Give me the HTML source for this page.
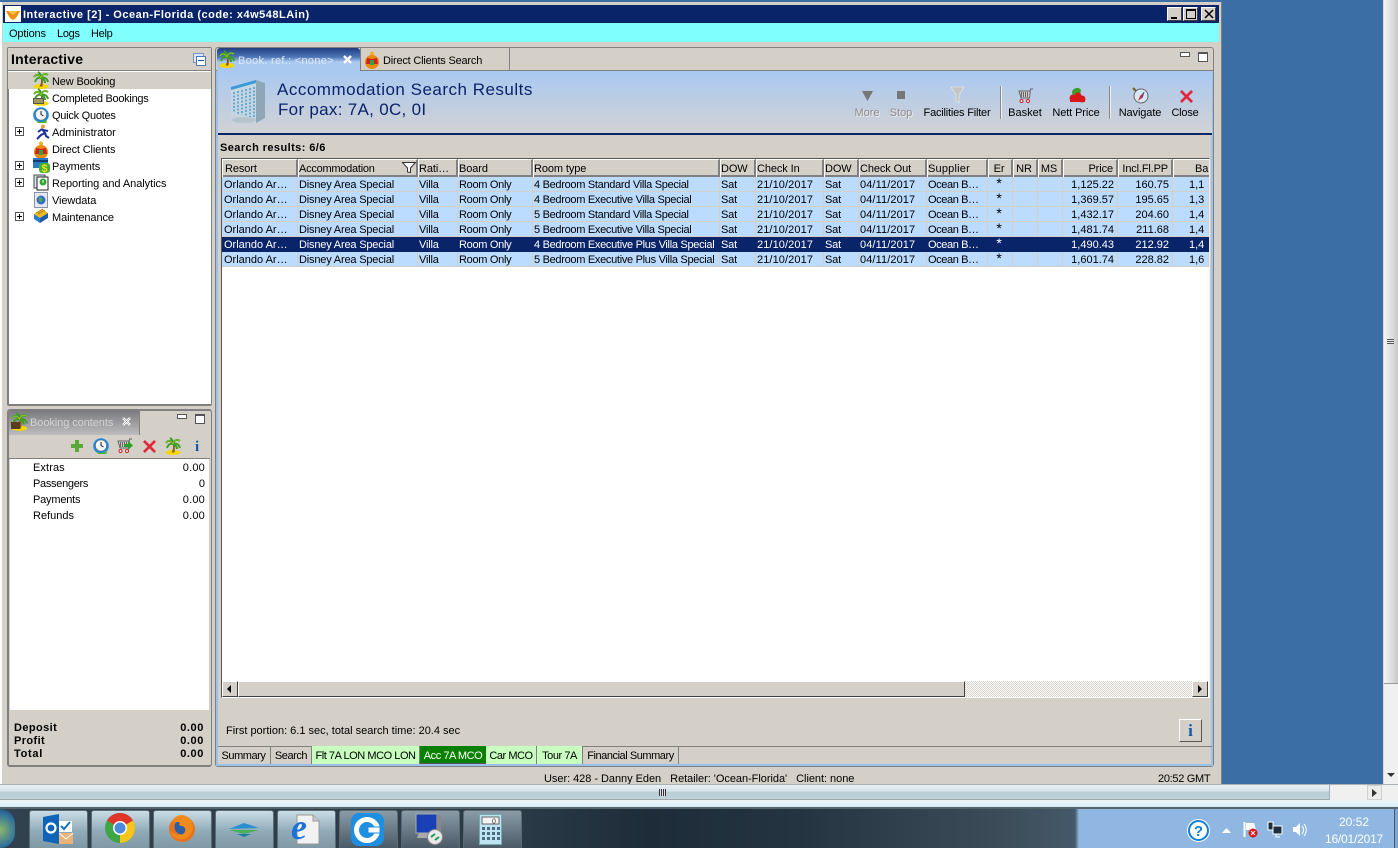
<!DOCTYPE html>
<html><head><meta charset="utf-8"><title>Interactive</title>
<style>
html,body{margin:0;padding:0;width:1398px;height:848px;overflow:hidden;background:#3a6ea5}
*{box-sizing:border-box}
body{font:11px/13px "Liberation Sans",sans-serif;color:#000;position:relative}
.a{position:absolute}
.t{position:absolute;white-space:nowrap;font:11px/13px "Liberation Sans",sans-serif;margin-top:1px}
.r{text-align:right}
.c{text-align:center}
svg{position:absolute;overflow:visible}
table{position:absolute;left:222px;top:159px;width:987px;border-collapse:separate;border-spacing:0;table-layout:fixed;font:11px/13px "Liberation Sans",sans-serif}
th{height:18px;background:#d4d0c8;font-weight:normal;text-align:left;padding:3px 0 0 0;border-left:1px solid #fff;border-top:1px solid #fff;border-right:2px solid #808080;box-shadow:inset 0 -2px #808080;white-space:nowrap;overflow:hidden;letter-spacing:-.1px;vertical-align:top}
th:first-child{padding-left:2px}
th:last-child{border-right:0}
td{height:15px;background:#bbdcff;padding:2px 0 0 1px;border-right:1px solid #d4d0c8;box-shadow:inset 0 -1px #d4d0c8;white-space:nowrap;overflow:hidden;letter-spacing:-.18px;vertical-align:top}
td:first-child{padding-left:2px;letter-spacing:0}
td:nth-child(4){letter-spacing:-.3px}
td:nth-child(5){letter-spacing:-.3px}
td:nth-child(7),td:nth-child(9){letter-spacing:.1px}
td:nth-child(10){letter-spacing:-.4px}
td:nth-child(14),td:nth-child(15),td:nth-child(16){letter-spacing:0}
tr.s td{background:#0a246a;color:#fff;border-color:#0a246a;box-shadow:none}
td.n,th.n{text-align:right;padding-right:3px;padding-left:0}
td.m,th.m{text-align:center;padding-left:0;padding-right:2px}
td.m{font-size:14px;line-height:11px;padding-top:1px}
.tb{position:absolute;top:746px;height:18px;border-right:1px solid #808080;padding:4px 0 0 0;text-align:center;white-space:nowrap;font:11px/13px "Liberation Sans",sans-serif;letter-spacing:-.45px}
.g{background:#c8ffc0}
.task{position:absolute;top:810px;height:38px;width:59px;border:1px solid #5d6a72;border-bottom:0;border-radius:3px 3px 0 0;background:linear-gradient(#c9dde6,#8faab8 55%,#7f98a6)}
.wb{position:absolute;top:7px;width:15px;height:14px;background:#d4d0c8;border:1px solid;border-color:#fff #404040 #404040 #fff}
</style></head><body>
<svg width="0" height="0" style="position:absolute">
<defs>
<symbol id="palm" viewBox="0 0 16 18"><ellipse cx="8" cy="15.500" rx="7.500" ry="2.400" fill="#f5d800"/><path d="M7.500 7C8.500 10 8 13 6.500 15.500h3C10 12 10 9 9 7z" fill="#8a5a20"/><path d="M8 7C6 3 3 3 1 6M8 7C5 6 3 8 2 11M8 7C8 4 7 2 5 1M8 7C9 3 12 2 15 4M8 7C11 6 14 7 15 11M8 7C10 8 12 9 12 12" stroke="#3f9c28" stroke-width="2" fill="none"/><path d="M8 7C6 3 3 3 1 6M8 7C9 3 12 2 15 4" stroke="#c0d820" stroke-width=".6" fill="none"/></symbol>
<symbol id="clock" viewBox="0 0 16 16"><circle cx="8" cy="8" r="7.800" fill="#1e88e0"/><circle cx="8" cy="7.500" r="5.600" fill="#f4f4f4" stroke="#555" stroke-width=".5"/><path d="M8 4v3.500l2.500 1.500" stroke="#222" fill="none"/><path d="M3 12.500C6 16 11 16 14 11.500l-.5 4.500H5z" fill="#52b52a"/></symbol>
<symbol id="cross" viewBox="0 0 14 14"><path d="M2 0 7 5 12 0l2 2-5 5 5 5-2 2-5-5-5 5-2-2 5-5-5-5z" fill="#e2273a"/></symbol>
<symbol id="shirt" viewBox="0 0 16 18"><circle cx="8" cy="2.500" r="2" fill="#f0b020"/><circle cx="8" cy="11" r="7" fill="#e88a10"/><path d="M3 7l5 1 5-1 1 6H2z" fill="#d32020"/><rect x="6" y="9" width="4" height="5" fill="#35a040"/></symbol>
<symbol id="basket" viewBox="0 0 16 16"><path d="M15 1h-2.500l-1 9H3L1 3h11" fill="#ccc" stroke="#666"/><path d="M3.500 4v5M5.500 4v5M7.500 4v5M9.500 4v5" stroke="#666"/><circle cx="3.500" cy="13" r="1.500" fill="#fff" stroke="#d02020"/><circle cx="10" cy="13" r="1.500" fill="#fff" stroke="#d02020"/></symbol>
</defs></svg>

<!-- window -->
<div class="a" style="left:0;top:0;width:1222px;height:785px;background:#d4d0c8;border-left:2px solid #fff;border-right:1px solid #808080"></div>
<div class="a" style="left:0;top:0;width:1222px;height:2px;background:#3a6ea5"></div>
<div class="a" style="left:3px;top:5px;width:1216px;height:18px;background:#0a246a"></div>
<div class="a" style="left:5px;top:6px;width:16px;height:16px;background:#fff"></div>
<svg style="left:5px;top:6px" width="16" height="16"><path d="M1 5h14l-4 7-3 2-3-2z" fill="#ee8d10"/><path d="M3 5h10l-5 4z" fill="#fbc050"/></svg>
<div class="t" style="left:23px;top:8px;color:#fff;font-weight:bold;letter-spacing:.5px">Interactive [2] - Ocean-Florida (code: x4w548LAin)</div>
<div class="wb" style="left:1167px"><div class="a" style="left:3px;top:9px;width:6px;height:2px;background:#000"></div></div>
<div class="wb" style="left:1183px"><div class="a" style="left:2px;top:1px;width:10px;height:10px;border:1px solid #000;border-top-width:2px"></div></div>
<div class="wb" style="left:1201px"><svg style="left:3px;top:2px" width="9" height="8"><path d="M0 0 8 8M8 0 0 8" stroke="#000" stroke-width="1.500"/></svg></div>
<div class="a" style="left:3px;top:23px;width:1216px;height:19px;background:#80ffff"></div>
<div class="t" style="left:9px;top:27px;letter-spacing:-.15px">Options</div>
<div class="t" style="left:57px;top:27px;letter-spacing:-.3px">Logs</div>
<div class="t" style="left:91px;top:27px;letter-spacing:-.3px">Help</div>

<!-- left panel -->
<div class="a" style="left:7px;top:47px;width:205px;height:359px;background:#fff;border:2px solid #808080;border-right-width:1px;border-radius:2px"></div>
<div class="a" style="left:8px;top:48px;width:203px;height:23px;background:#d4d0c8;border-bottom:1px solid #808080"></div>
<div class="t" style="left:11px;top:51px;font-size:14px;line-height:15px;font-weight:bold;letter-spacing:.2px">Interactive</div>
<div class="a" style="left:193px;top:53px;width:11px;height:10px;border:1px solid #7a96c0;background:#dde6f2"></div>
<div class="a" style="left:196px;top:56px;width:10px;height:10px;border:1px solid #4a78b0;background:#fff"></div>
<div class="a" style="left:198px;top:60px;width:6px;height:1px;background:#1d4f90"></div>
<div class="a" style="left:8px;top:71px;width:203px;height:18px;background:#d4d0c8;border-top:1px solid #fff"></div>
<svg style="left:33px;top:71px" width="16" height="18"><use href="#palm"/></svg>
<svg style="left:33px;top:88px" width="16" height="18"><use href="#palm"/></svg>
<div class="a" style="left:33px;top:98px;width:11px;height:6px;background:#9c9a5c;border:1px solid #555"></div>
<svg style="left:33px;top:107px" width="16" height="16"><use href="#clock"/></svg>
<svg style="left:36px;top:124px" width="14" height="16"><circle cx="7" cy="2.500" r="2" fill="#e8a040"/><path d="M6 5 9 9 5 11 1 15M9 9l1 3 3 2M6 5 2 8M7 6l5 1" stroke="#1a2f9a" stroke-width="2" fill="none"/></svg>
<svg style="left:33px;top:141px" width="16" height="18"><use href="#shirt"/></svg>
<svg style="left:33px;top:157px" width="17" height="17"><rect x="0" y="1" width="15" height="10" fill="#2878c8"/><rect x="0" y="3" width="15" height="2" fill="#123c70"/><rect x="6" y="6" width="11" height="10" rx="3" fill="#48b030"/><text x="8.500" y="15" font-family="Liberation Sans" font-weight="bold" font-size="11" fill="#e8e020">$</text></svg>
<svg style="left:34px;top:175px" width="15" height="16"><rect x="0" y="0" width="11" height="13" fill="#d8e4ee" stroke="#445"/><rect x="3" y="2" width="11" height="13" fill="#fff" stroke="#222"/><circle cx="9" cy="7" r="3.500" fill="#2fa52f"/><path d="M9 5v3" stroke="#fff"/></svg>
<svg style="left:34px;top:192px" width="14" height="16"><rect x=".5" y=".5" width="13" height="15" fill="#e8e8ee" stroke="#8a94a8"/><circle cx="7" cy="8" r="4.500" fill="#3470c8"/><path d="M5 5c3 0 4 2 3 4s-3 1-3-1" fill="#58a850"/></svg>
<svg style="left:33px;top:208px" width="16" height="16"><path d="M1 6 9 1l6 4-8 5z" fill="#f0b818"/><path d="M1 6v5l6 4v-5z" fill="#2a7cd0"/><path d="M7 10v5l8-5V5z" fill="#1a5cb0"/><path d="M3 5 10 1M5 6 12 2" stroke="#a87810"/></svg>
<div class="t" style="left:52px;top:75px;letter-spacing:-.15px">New Booking</div>
<div class="t" style="left:52px;top:92px;letter-spacing:-.28px">Completed Bookings</div>
<div class="t" style="left:52px;top:109px;letter-spacing:-.25px">Quick Quotes</div>
<div class="t" style="left:52px;top:126px;letter-spacing:-.08px">Administrator</div>
<div class="t" style="left:52px;top:143px;letter-spacing:-.15px">Direct Clients</div>
<div class="t" style="left:52px;top:160px;letter-spacing:-.1px">Payments</div>
<div class="t" style="left:52px;top:177px;letter-spacing:-.05px">Reporting and Analytics</div>
<div class="t" style="left:52px;top:194px;letter-spacing:-.1px">Viewdata</div>
<div class="t" style="left:52px;top:211px;letter-spacing:-.1px">Maintenance</div>
<svg style="left:15px;top:127px" width="9" height="94"><g fill="#fff" stroke="#555"><rect x=".5" y=".5" width="8" height="8"/><rect x=".5" y="34.500" width="8" height="8"/><rect x=".5" y="51.500" width="8" height="8"/><rect x=".5" y="85.500" width="8" height="8"/></g><path d="M2 4.500h5M4.500 2v5M2 38.500h5M4.500 36v5M2 55.500h5M4.500 53v5M2 89.500h5M4.500 87v5" stroke="#000"/></svg>

<!-- booking contents -->
<div class="a" style="left:7px;top:409px;width:205px;height:358px;background:#d4d0c8;border:2px solid #808080;border-right-width:1px;border-radius:3px"></div>
<div class="a" style="left:9px;top:410px;width:130px;height:25px;background:linear-gradient(#7a7a7e,#bdbdc0);border-radius:3px 0 0 0"></div>
<div class="a" style="left:139px;top:410px;width:1px;height:25px;background:#808080"></div>
<svg style="left:11px;top:412px" width="17" height="19"><use href="#palm"/><rect x="0" y="10" width="9" height="7" fill="#5a3a20"/></svg>
<div class="t" style="left:30px;top:416px;color:#d4d4d4;letter-spacing:-.07px">Booking contents</div>
<svg style="left:122px;top:417px" width="9" height="9"><path d="M1 1 8 8M8 1 1 8" stroke="#fff" stroke-width="2.400"/><path d="M1 1 8 8M8 1 1 8" stroke="#222" stroke-width=".3"/></svg>
<div class="a" style="left:177px;top:414px;width:10px;height:5px;border:1px solid #555;background:#fff"></div>
<div class="a" style="left:195px;top:414px;width:10px;height:10px;border:1px solid #555;border-top-width:2px;background:#fff"></div>
<div class="a" style="left:9px;top:435px;width:201px;height:24px;background:#d4d0c8;border-bottom:1px solid #808080"></div>
<svg style="left:71px;top:440px" width="12" height="12"><path d="M4 0h4v4h4v4H8v4H4V8H0V4h4z" fill="#5aa83a"/></svg>
<svg style="left:93px;top:438px" width="16" height="16"><use href="#clock"/></svg>
<svg style="left:117px;top:438px" width="16" height="16"><use href="#basket"/><path d="M7 6h4V3l5 4.500L11 12V9H7z" fill="#28a028"/></svg>
<svg style="left:143px;top:440px" width="13" height="13"><use href="#cross"/></svg>
<svg style="left:165px;top:437px" width="16" height="18"><use href="#palm"/></svg>
<div class="t" style="left:195px;top:438px;font:bold 15px/17px 'Liberation Serif',serif;color:#1457a8">i</div>
<div class="a" style="left:10px;top:459px;width:199px;height:251px;background:#fff"></div>
<div class="t" style="left:33px;top:461px;letter-spacing:.1px">Extras</div><div class="t r" style="right:1193px;top:461px;letter-spacing:.2px">0.00</div>
<div class="t" style="left:33px;top:477px;letter-spacing:-.3px">Passengers</div><div class="t r" style="right:1193px;top:477px">0</div>
<div class="t" style="left:33px;top:493px;letter-spacing:-.2px">Payments</div><div class="t r" style="right:1193px;top:493px;letter-spacing:.2px">0.00</div>
<div class="t" style="left:33px;top:509px">Refunds</div><div class="t r" style="right:1193px;top:509px;letter-spacing:.2px">0.00</div>
<div class="t" style="left:14px;top:721px;font-weight:bold;letter-spacing:.4px">Deposit</div><div class="t r" style="right:1194px;top:721px;font-weight:bold;letter-spacing:.6px">0.00</div>
<div class="t" style="left:14px;top:734px;font-weight:bold;letter-spacing:.4px">Profit</div><div class="t r" style="right:1194px;top:734px;font-weight:bold;letter-spacing:.6px">0.00</div>
<div class="t" style="left:14px;top:747px;font-weight:bold;letter-spacing:.7px">Total</div><div class="t r" style="right:1194px;top:747px;font-weight:bold;letter-spacing:.6px">0.00</div>

<!-- main panel -->
<div class="a" style="left:215px;top:47px;width:999px;height:720px;background:#d4d0c8;border:1px solid #808080;border-radius:3px"></div>
<div class="a" style="left:216px;top:70px;width:997px;height:696px;border:2px solid #9cc0ec;border-top:0"></div>
<div class="a" style="left:216px;top:70px;width:997px;height:1px;background:#808080"></div>
<div class="a" style="left:217px;top:48px;width:143px;height:23px;background:linear-gradient(#1f3d80 0,#4f78b8 40%,#a9c9f0 60%,#a9c9f0);border-radius:3px 3px 0 0"></div>
<svg style="left:219px;top:50px" width="16" height="18"><use href="#palm"/></svg>
<div class="t" style="left:238px;top:54px;color:#dfe8f5;letter-spacing:.3px">Book. ref.: &lt;none&gt;</div>
<svg style="left:343px;top:55px" width="9" height="9"><path d="M1 1 8 8M8 1 1 8" stroke="#fff" stroke-width="2.400"/></svg>
<div class="a" style="left:360px;top:48px;width:150px;height:22px;background:#d4d0c8;border-left:1px solid #808080;border-right:1px solid #808080"></div>
<svg style="left:364px;top:51px" width="16" height="18"><use href="#shirt"/></svg>
<div class="t" style="left:383px;top:54px;letter-spacing:-.2px">Direct Clients Search</div>
<div class="a" style="left:1180px;top:52px;width:10px;height:5px;border:1px solid #555;background:#fff"></div>
<div class="a" style="left:1198px;top:52px;width:10px;height:10px;border:1px solid #555;border-top-width:2px;background:#fff"></div>

<div class="a" style="left:218px;top:71px;width:994px;height:64px;background:linear-gradient(#a9c9f2,#d2d2d4);border-bottom:2px solid #0a246a"></div>
<svg style="left:230px;top:78px" width="36" height="48"><path d="M1 9 26 2v42L1 38z" fill="#c4d6e2"/><path d="M26 2l9 3v35l-9 5z" fill="#8fa6b6"/><path d="M1 9 26 2v3L1 12z" fill="#3a9ad8"/><path d="M4 14v21M8 13v23M12 12v25M16 11v27M20 10v29M24 9v31" stroke="#4f9cd0" stroke-width="1.500" stroke-dasharray="2 1.500"/><ellipse cx="14" cy="42" rx="12" ry="3" fill="#b8c4cc"/></svg>
<div class="t" style="left:277px;top:79px;font-size:17px;line-height:19px;color:#0a246a;letter-spacing:.5px">Accommodation Search Results</div>
<div class="t" style="left:278px;top:99px;font-size:17px;line-height:19px;color:#0a246a;letter-spacing:.3px">For pax: 7A, 0C, 0I</div>

<svg style="left:862px;top:91px" width="12" height="10"><path d="M0 0h11L5.500 10z" fill="#777"/></svg>
<div class="a" style="left:897px;top:91px;width:8px;height:8px;background:#777"></div>
<svg style="left:951px;top:87px" width="13" height="17"><path d="M0 0h13L8 8v8L5 14V8z" fill="#c4c4c4" stroke="#eee" stroke-width=".6"/></svg>
<div class="a" style="left:1000px;top:86px;width:2px;height:33px;background:#8a8a8a;border-right:1px solid #eee"></div>
<svg style="left:1018px;top:88px" width="16" height="16"><use href="#basket"/></svg>
<svg style="left:1069px;top:87px" width="17" height="17"><path d="M3 6a5 5 0 0 1 9-3l-1 5H4z" fill="#3f9c28"/><circle cx="4" cy="11" r="3.500" fill="#d81818"/><circle cx="9" cy="9" r="3.500" fill="#d81818"/><circle cx="13" cy="12" r="3.500" fill="#d81818"/><rect x="1" y="11" width="15" height="4" fill="#d81818"/></svg>
<div class="a" style="left:1109px;top:86px;width:2px;height:33px;background:#8a8a8a;border-right:1px solid #eee"></div>
<svg style="left:1132px;top:87px" width="17" height="17"><circle cx="9" cy="9" r="7" fill="#d6e8f5" stroke="#666"/><path d="M12 5 8 9l-2 5 4-3z" fill="#d03030"/><path d="M12 5 10 11" stroke="#2858a8"/><path d="M1 1l3 3" stroke="#7a5a20" stroke-width="2"/></svg>
<svg style="left:1180px;top:90px" width="13" height="13"><use href="#cross"/></svg>
<div class="t c" style="left:847px;width:40px;top:106px;color:#8c8c8c;text-shadow:1px 1px 0 #eee">More</div>
<div class="t c" style="left:881px;width:40px;top:106px;color:#8c8c8c;text-shadow:1px 1px 0 #eee">Stop</div>
<div class="t c" style="left:917px;width:80px;top:106px;letter-spacing:-.2px">Facilities Filter</div>
<div class="t c" style="left:1005px;width:40px;top:106px">Basket</div>
<div class="t c" style="left:1046px;width:60px;top:106px;letter-spacing:-.1px">Nett Price</div>
<div class="t c" style="left:1115px;width:50px;top:106px;letter-spacing:-.1px">Navigate</div>
<div class="t c" style="left:1165px;width:40px;top:106px;letter-spacing:-.2px">Close</div>

<div class="t" style="left:220px;top:141px;font-weight:bold;letter-spacing:.42px">Search results: 6/6</div>

<!-- table box -->
<div class="a" style="left:221px;top:158px;width:989px;height:540px;background:#fff;border-top:1px solid #555;border-left:1px solid #555;border-right:1px solid #eee;border-bottom:1px solid #fff"></div>
<table>
<colgroup><col style="width:76px"><col style="width:120px"><col style="width:40px"><col style="width:75px"><col style="width:187px"><col style="width:36px"><col style="width:68px"><col style="width:35px"><col style="width:68px"><col style="width:61px"><col style="width:25px"><col style="width:25px"><col style="width:25px"><col style="width:55px"><col style="width:55px"><col style="width:36px"></colgroup>
<tr><th>Resort</th><th style="letter-spacing:-.25px">Accommodation</th><th>Rati…</th><th>Board</th><th>Room type</th><th>DOW</th><th>Check In</th><th>DOW</th><th>Check Out</th><th style="letter-spacing:.2px">Supplier</th><th class="m">Er</th><th class="m">NR</th><th class="m">MS</th><th class="n">Price</th><th class="n" style="letter-spacing:-.15px">Incl.Fl.PP</th><th style="padding-left:21px">Ba</th></tr>
<tr><td>Orlando Ar…</td><td>Disney Area Special</td><td>Villa</td><td>Room Only</td><td>4 Bedroom Standard Villa Special</td><td>Sat</td><td>21/10/2017</td><td>Sat</td><td>04/11/2017</td><td>Ocean B…</td><td class="m">*</td><td></td><td></td><td class="n">1,125.22</td><td class="n">160.75</td><td style="padding-left:16px">1,1</td></tr>
<tr><td>Orlando Ar…</td><td>Disney Area Special</td><td>Villa</td><td>Room Only</td><td>4 Bedroom Executive Villa Special</td><td>Sat</td><td>21/10/2017</td><td>Sat</td><td>04/11/2017</td><td>Ocean B…</td><td class="m">*</td><td></td><td></td><td class="n">1,369.57</td><td class="n">195.65</td><td style="padding-left:16px">1,3</td></tr>
<tr><td>Orlando Ar…</td><td>Disney Area Special</td><td>Villa</td><td>Room Only</td><td>5 Bedroom Standard Villa Special</td><td>Sat</td><td>21/10/2017</td><td>Sat</td><td>04/11/2017</td><td>Ocean B…</td><td class="m">*</td><td></td><td></td><td class="n">1,432.17</td><td class="n">204.60</td><td style="padding-left:16px">1,4</td></tr>
<tr><td>Orlando Ar…</td><td>Disney Area Special</td><td>Villa</td><td>Room Only</td><td>5 Bedroom Executive Villa Special</td><td>Sat</td><td>21/10/2017</td><td>Sat</td><td>04/11/2017</td><td>Ocean B…</td><td class="m">*</td><td></td><td></td><td class="n">1,481.74</td><td class="n">211.68</td><td style="padding-left:16px">1,4</td></tr>
<tr class="s"><td>Orlando Ar…</td><td>Disney Area Special</td><td>Villa</td><td>Room Only</td><td>4 Bedroom Executive Plus Villa Special</td><td>Sat</td><td>21/10/2017</td><td>Sat</td><td>04/11/2017</td><td>Ocean B…</td><td class="m">*</td><td></td><td></td><td class="n">1,490.43</td><td class="n">212.92</td><td style="padding-left:16px">1,4</td></tr>
<tr><td>Orlando Ar…</td><td>Disney Area Special</td><td>Villa</td><td>Room Only</td><td>5 Bedroom Executive Plus Villa Special</td><td>Sat</td><td>21/10/2017</td><td>Sat</td><td>04/11/2017</td><td>Ocean B…</td><td class="m">*</td><td></td><td></td><td class="n">1,601.74</td><td class="n">228.82</td><td style="padding-left:16px">1,6</td></tr>
</table>
<svg style="left:402px;top:162px" width="14" height="11"><path d="M.5.500h13L8.500 6v4.500L5.500 10V6z" fill="#fff" stroke="#333"/></svg>

<!-- scrollbar -->
<div class="a" style="left:222px;top:681px;width:986px;height:16px;background:repeating-conic-gradient(#d4d0c8 0 25%,#fff 0 50%) 0 0/2px 2px"></div>
<div class="a" style="left:222px;top:681px;width:16px;height:16px;background:#d4d0c8;border:1px solid;border-color:#fff #404040 #404040 #fff"></div>
<svg style="left:227px;top:685px" width="5" height="8"><path d="M4 0v8L0 4z" fill="#000"/></svg>
<div class="a" style="left:238px;top:681px;width:727px;height:16px;background:#d4d0c8;border:1px solid;border-color:#fff #404040 #404040 #fff"></div>
<div class="a" style="left:1192px;top:681px;width:16px;height:16px;background:#d4d0c8;border:1px solid;border-color:#fff #404040 #404040 #fff"></div>
<svg style="left:1198px;top:685px" width="5" height="8"><path d="M0 0v8l4-4z" fill="#000"/></svg>

<div class="t" style="left:226px;top:724px">First portion: 6.1 sec, total search time: 20.4 sec</div>
<div class="a" style="left:1179px;top:719px;width:23px;height:23px;background:#d4d0c8;border:1px solid;border-color:#fff #555 #555 #fff"></div>
<div class="t c" style="left:1179px;width:23px;top:720px;font:bold 17px/19px 'Liberation Serif',serif;color:#1457a8">i</div>
<div class="a" style="left:218px;top:746px;width:994px;height:1px;background:#808080"></div>

<div class="tb" style="left:217px;width:54px">Summary</div>
<div class="tb" style="left:271px;width:41px">Search</div>
<div class="tb g" style="left:312px;width:108px">Flt 7A LON MCO LON</div>
<div class="tb" style="left:420px;width:66px;background:#0a8000;color:#fff;border-right:0;border-bottom:1px solid #555">Acc 7A MCO</div>
<div class="tb g" style="left:486px;width:51px">Car MCO</div>
<div class="tb g" style="left:537px;width:46px">Tour 7A</div>
<div class="tb" style="left:583px;width:96px">Financial Summary</div>

<div class="t" style="left:544px;top:772px;letter-spacing:-.04px">User: 428 - Danny Eden&nbsp;&nbsp; Retailer: 'Ocean-Florida'&nbsp;&nbsp; Client: none</div>
<div class="t" style="left:1158px;top:772px;letter-spacing:-.3px">20:52 GMT</div>

<!-- vertical scrollbar -->
<div class="a" style="left:1383px;top:0;width:15px;height:785px;background:#f0f0f0;border-left:1px solid #d8d8d8"></div>
<div class="a" style="left:1384px;top:0;width:14px;height:684px;background:linear-gradient(90deg,#f4f4f4,#dcdcdc 60%,#c8c8c8);border-bottom:1px solid #9a9a9a"></div>
<div class="a" style="left:1387px;top:339px;width:7px;height:5px;background:repeating-linear-gradient(#555 0 1px,#e8e8e8 1px 2px)"></div>
<svg style="left:1387px;top:773px" width="8" height="4"><path d="M0 0h8L4 4z" fill="#333"/></svg>

<!-- horizontal scrollbar -->
<div class="a" style="left:0;top:784px;width:1398px;height:17px;background:#f0f0f0;border-top:1px solid #a8b0b4"></div>
<div class="a" style="left:0;top:785px;width:1330px;height:15px;background:linear-gradient(#e8f0f4,#d8e4ea 40%,#b8ccd6 55%,#c0d2dc);border-right:1px solid #9fb0b8;border-bottom:1px solid #a0a8ac"></div>
<div class="a" style="left:659px;top:789px;width:7px;height:7px;background:repeating-linear-gradient(90deg,#333 0 1px,#dde 1px 2px)"></div>
<div class="a" style="left:1367px;top:785px;width:15px;height:15px;background:#ececec;border:1px solid #d0d0d0"></div>
<svg style="left:1372px;top:789px" width="5" height="8"><path d="M0 0v8l5-4z" fill="#333"/></svg>

<!-- taskbar -->
<div class="a" style="left:0;top:801px;width:1398px;height:6px;background:linear-gradient(#eef6f8,#d4eef4)"></div>
<div class="a" style="left:0;top:807px;width:1398px;height:41px;background:linear-gradient(90deg,#31414d 0,#2a3a46 521px,#1d2c38 650px,#243440 800px,#3c4c58 1000px,#45596a 1075px,#8fb7e2 1079px,#8fb7e2 1398px);border-top:2px solid #56646c"></div>
<div class="a" style="left:0;top:809px;width:15px;height:39px;background:radial-gradient(circle at 0 21px,#8ab86a 0,#2f6f9c 65%,#1c3e58 100%);border-radius:0 20px 20px 0"></div>
<div class="task" style="left:29px"></div>
<div class="task" style="left:91px"></div>
<div class="task" style="left:153px"></div>
<div class="task" style="left:215px"></div>
<div class="task" style="left:277px"></div>
<div class="task" style="left:339px;background:linear-gradient(#8a9ca8,#4a5a66)"></div>
<div class="task" style="left:401px;background:linear-gradient(#8a9ca8,#4a5a66)"></div>
<div class="task" style="left:463px;background:linear-gradient(#8a9ca8,#4a5a66)"></div>
<!-- outlook -->
<svg style="left:42px;top:813px" width="32" height="32"><path d="M1 4 17 1v30L1 28z" fill="#0d64b8"/><circle cx="9" cy="15" r="4.500" fill="none" stroke="#fff" stroke-width="2.200"/><rect x="17" y="8" width="13" height="11" fill="#fff"/><path d="M19 13l3 3 6-7" stroke="#1a6cc0" stroke-width="2" fill="none"/><rect x="17" y="20" width="14" height="11" fill="#ebb27a"/><path d="M17 20l7 6 7-6" stroke="#fff" fill="none"/></svg>
<!-- chrome -->
<svg style="left:105px;top:813px" width="30" height="30"><circle cx="15" cy="15" r="15" fill="#3fa648"/><path d="M15 15 2 7.500A15 15 0 0 1 28 7.500z" fill="#e0352b"/><path d="M15 15 28 7.500A15 15 0 0 1 15 30z" fill="#f5c518"/><circle cx="15" cy="15" r="7" fill="#fff"/><circle cx="15" cy="15" r="5.500" fill="#4a89dc"/></svg>
<!-- firefox -->
<svg style="left:167px;top:813px" width="30" height="30"><circle cx="15" cy="16" r="13" fill="#e8731c"/><circle cx="15" cy="14" r="7.500" fill="#2b5fa8"/><path d="M5 8c4-8 16-8 20 1 3 8-2 15-8 17-7 1-13-2-14-9 3 5 9 6 13 4 3-2 3-6 0-8-3 1-5-2-3-4-4 0-6 1-8-1z" fill="#f08a1a"/></svg>
<!-- blue/green logo -->
<svg style="left:229px;top:820px" width="30" height="20"><path d="M0 9 15 3l15 5z" fill="#2a8fd0"/><path d="M0 10h30l-15 4z" fill="#48b058"/><path d="M8 14h14l-7 3z" fill="#1f7aa8"/></svg>
<!-- IE page -->
<svg style="left:291px;top:813px" width="30" height="32"><path d="M6 2h16l6 6v23H6z" fill="#f2f2f2" stroke="#999"/><path d="M22 2v6h6" fill="#ccc" stroke="#999"/><text x="0" y="26" font-family="Liberation Serif" font-style="italic" font-weight="bold" font-size="36" fill="#1a73d8">e</text></svg>
<!-- C icon -->
<svg style="left:351px;top:813px" width="33" height="33"><rect width="33" height="33" rx="8" fill="#1e8ee0"/><circle cx="16" cy="17" r="10.500" fill="none" stroke="#fff" stroke-width="5"/><rect x="17" y="14" width="12" height="6" fill="#fff" stroke="#1e8ee0"/></svg>
<!-- RDP -->
<svg style="left:414px;top:813px" width="32" height="32"><rect x="2" y="1" width="21" height="19" fill="#1a40b8" stroke="#aaa"/><path d="M23 1l4 2v19l-4-2z" fill="#888"/><path d="M5 20h16l2 5H3z" fill="#aaa"/><circle cx="21" cy="24" r="7.500" fill="#e8e8e8" stroke="#888"/><path d="M17 24l4-3M21 27l4-3" stroke="#1a9a50" stroke-width="2"/></svg>
<!-- calc -->
<svg style="left:479px;top:814px" width="26" height="31"><rect x=".5" y=".5" width="22" height="30" fill="#bfe3f0" stroke="#7aa"/><rect x="3" y="3" width="17" height="7" fill="#f4f4f4" stroke="#666"/><text x="13" y="9.500" font-family="Liberation Sans" font-size="7" fill="#333">0</text><g fill="#4a6a80"><rect x="3" y="13" width="3" height="3"/><rect x="8" y="13" width="3" height="3"/><rect x="13" y="13" width="3" height="3"/><rect x="18" y="13" width="3" height="3"/><rect x="3" y="18" width="3" height="3"/><rect x="8" y="18" width="3" height="3"/><rect x="13" y="18" width="3" height="3"/><rect x="18" y="18" width="3" height="3"/><rect x="3" y="23" width="3" height="3"/><rect x="8" y="23" width="3" height="3"/><rect x="13" y="23" width="3" height="3"/><rect x="18" y="23" width="3" height="3"/></g></svg>
<!-- tray -->
<svg style="left:1187px;top:819px" width="23" height="23"><circle cx="11.500" cy="11.500" r="11" fill="#0f7fd8" stroke="#fff" stroke-width="1"/><circle cx="11.500" cy="11.500" r="8.500" fill="#fff"/><text x="11.500" y="17" text-anchor="middle" font-family="Liberation Sans" font-weight="bold" font-size="15" fill="#0f7fd8">?</text></svg>
<svg style="left:1222px;top:828px" width="9" height="5"><path d="M0 5 4.500 0 9 5z" fill="#fff"/></svg>
<svg style="left:1243px;top:822px" width="16" height="17"><path d="M1.500 0v15" stroke="#fff" stroke-width="2"/><path d="M3 1h8l2 7H3z" fill="#fff"/><circle cx="10" cy="11" r="4.500" fill="#d81818"/><path d="M8 9l4 4M12 9l-4 4" stroke="#fff"/></svg>
<svg style="left:1267px;top:822px" width="16" height="16"><rect x="6" y="4" width="9" height="8" fill="#1e3040" stroke="#fff"/><rect x="1" y="0" width="5" height="8" fill="#1e3040" stroke="#fff"/><path d="M9 12v3h4" stroke="#fff" fill="none"/></svg>
<svg style="left:1292px;top:822px" width="15" height="16"><path d="M1 5h3l4-4v13l-4-4H1z" fill="#fff"/><path d="M10 4c2 2 2 6 0 8M12 2c3 3 3 9 0 12" stroke="#fff" fill="none"/></svg>
<div class="t c" style="left:1314px;width:80px;top:815px;color:#fff;font-size:12px">20:52</div>
<div class="t c" style="left:1314px;width:80px;top:832px;color:#fff;font-size:12px;letter-spacing:-.2px">16/01/2017</div>
<div class="a" style="left:1394px;top:809px;width:4px;height:39px;background:#7ea6d0;border-left:1px solid #44566a"></div>
</body></html>
